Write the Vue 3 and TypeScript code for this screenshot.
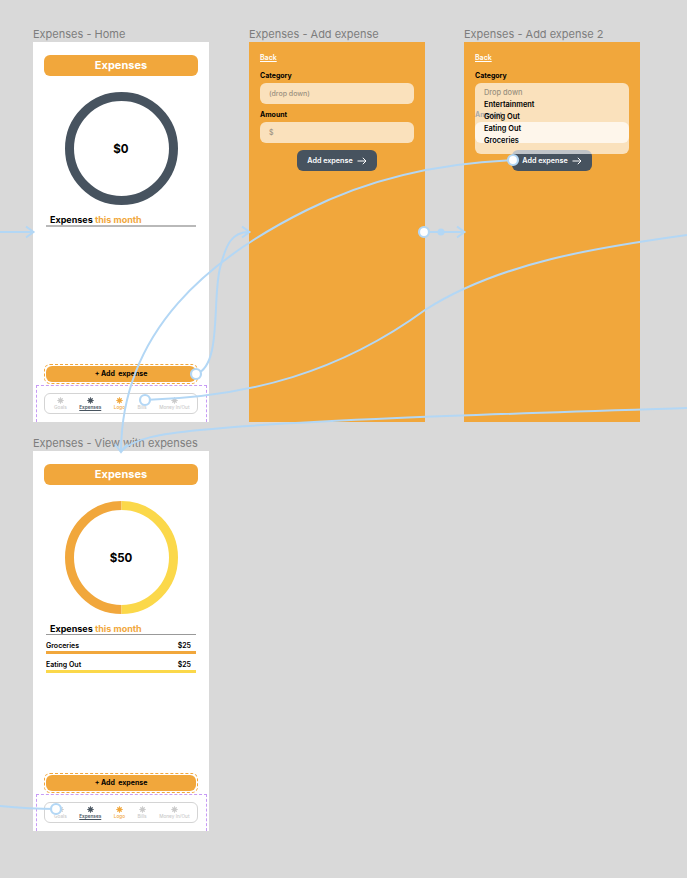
<script setup lang="ts">
const navItems = [
  { label: 'Goals', tone: 'muted' },
  { label: 'Expenses', tone: 'dark' },
  { label: 'Logo', tone: 'orange' },
  { label: 'Bills', tone: 'muted' },
  { label: 'Money In/Out', tone: 'muted' },
]
const sun = 'M3.5 0v7M0 3.5h7M1 1l5 5M6 1L1 6'
const viewRows = [
  { name: 'Groceries', amount: '$25', tone: 'orange' },
  { name: 'Eating Out', amount: '$25', tone: 'yellow' },
]
const dropOptions = ['Entertainment', 'Going Out', 'Eating Out', 'Groceries']
</script>

<template>
  <div class="canvas">
    <section class="screen at-home">
      <h2 class="frame-title">Expenses - Home</h2>
      <div class="frame white">
        <div class="banner">Expenses</div>
        <div class="ring">
          <svg width="113" height="113" viewBox="0 0 113 113"><circle cx="56.5" cy="56.5" r="52" fill="none" stroke="#47535f" stroke-width="9" /></svg>
          <span class="total">$0</span>
        </div>
        <div class="month">Expenses <em>this month</em></div>
        <div class="rule thick"></div>
        <div class="add-wrap"><button class="add">+ Add&nbsp; expense</button></div>
        <div class="nav-wrap">
          <nav class="nav">
            <div v-for="n in navItems" :key="n.label" class="nav-item" :class="n.tone">
              <svg width="7" height="7" viewBox="0 0 7 7"><path :d="sun" stroke="currentColor" stroke-width="0.7" /><circle cx="3.5" cy="3.5" r="2.3" fill="currentColor" /></svg>
              <span>{{ n.label }}</span>
            </div>
          </nav>
        </div>
      </div>
    </section>

    <section class="screen at-add">
      <h2 class="frame-title">Expenses - Add expense</h2>
      <div class="frame orange-bg form">
        <a class="back">Back</a>
        <label class="label first">Category</label>
        <div class="field">(drop down)</div>
        <label class="label">Amount</label>
        <div class="field">$</div>
        <button class="submit">Add expense
          <svg width="10" height="8" viewBox="0 0 10 8"><path d="M0.5 4h8.5M5.8 0.8L9 4L5.8 7.2" fill="none" stroke="#fff" stroke-width="1" /></svg>
        </button>
      </div>
    </section>

    <section class="screen at-add2">
      <h2 class="frame-title">Expenses - Add expense 2</h2>
      <div class="frame orange-bg form">
        <a class="back">Back</a>
        <label class="label first">Category</label>
        <div class="field blank"></div>
        <label class="label">Amount</label>
        <div class="field blank"></div>
        <button class="submit">Add expense
          <svg width="10" height="8" viewBox="0 0 10 8"><path d="M0.5 4h8.5M5.8 0.8L9 4L5.8 7.2" fill="none" stroke="#fff" stroke-width="1" /></svg>
        </button>
        <div class="dropdown">
          <div class="hilite"></div>
          <div class="opt placeholder">Drop down</div>
          <div v-for="o in dropOptions" :key="o" class="opt">{{ o }}</div>
        </div>
      </div>
    </section>

    <section class="screen at-view">
      <h2 class="frame-title">Expenses - View with expenses</h2>
      <div class="frame white">
        <div class="banner">Expenses</div>
        <div class="ring">
          <svg width="113" height="113" viewBox="0 0 113 113">
            <path d="M56.5 4.5a52 52 0 0 0 0 104" fill="none" stroke="#f1a73c" stroke-width="9" />
            <path d="M56.5 4.5a52 52 0 0 1 0 104" fill="none" stroke="#fbd84a" stroke-width="9" />
          </svg>
          <span class="total">$50</span>
        </div>
        <div class="month">Expenses <em>this month</em></div>
        <div class="rule"></div>
        <div v-for="r in viewRows" :key="r.name" class="row">
          <div class="row-text"><span>{{ r.name }}</span><span>{{ r.amount }}</span></div>
          <div class="bar" :class="r.tone"></div>
        </div>
        <div class="add-wrap"><button class="add">+ Add&nbsp; expense</button></div>
        <div class="nav-wrap">
          <nav class="nav">
            <div v-for="n in navItems" :key="n.label" class="nav-item" :class="n.tone">
              <svg width="7" height="7" viewBox="0 0 7 7"><path :d="sun" stroke="currentColor" stroke-width="0.7" /><circle cx="3.5" cy="3.5" r="2.3" fill="currentColor" /></svg>
              <span>{{ n.label }}</span>
            </div>
          </nav>
        </div>
      </div>
    </section>

    <svg class="wires" width="687" height="878" viewBox="0 0 687 878" fill="none" stroke="#b3d7f5" stroke-width="2">
      <path d="M0 232H33M26 226.5L33.5 232L26 237.5" />
      <path d="M196 374C222 366 212 300 220 268C226 244 232 232 249 232M242 226.5L249.5 232L242 237.5" />
      <path d="M424 232H464M457 226.5L464.5 232L457 237.5" />
      <circle cx="441" cy="232" r="2.5" fill="#b3d7f5" />
      <path d="M513 160C440 163 370 178 307 210C210 258 122 330 121 451M115 444L121 452L127 444" />
      <path d="M145 400C250 397 340 372 425 310C500 262 600 247 687 235" />
      <path d="M687 408C500 414 300 420 200 430C160 434 135 438 121 451" />
      <path d="M0 806C20 808 40 809 56 809" />
      <g fill="#fff" stroke-width="2.2">
        <circle cx="196" cy="374" r="5" />
        <circle cx="424" cy="232" r="5" />
        <circle cx="513" cy="160" r="5" />
        <circle cx="145" cy="400" r="5" />
        <circle cx="56" cy="809" r="5" />
      </g>
    </svg>
  </div>
</template>

<style scoped>
.canvas {
  position: relative;
  width: 687px;
  height: 878px;
  overflow: hidden;
  background: #d9d9d9;
  font-family: Inter, "Liberation Sans", sans-serif;
}
.screen { position: absolute; width: 176px; }
.at-home { left: 33px; top: 27px; }
.at-add { left: 249px; top: 27px; }
.at-add2 { left: 464px; top: 27px; }
.at-view { left: 33px; top: 436px; }
.frame-title {
  margin: 0;
  height: 15px;
  font-size: 11px;
  line-height: 14px;
  font-weight: 400;
  color: #7d7d7d;
  white-space: nowrap;
}
.frame {
  position: relative;
  box-sizing: border-box;
  height: 380px;
  display: flex;
  flex-direction: column;
}
.white { background: #fff; padding: 13px 11px 0; }
.orange-bg { background: #f1a73c; }
.banner {
  height: 21px;
  flex: none;
  border-radius: 6px;
  background: #f1a73c;
  color: #fff;
  font-size: 11px;
  font-weight: 700;
  line-height: 21px;
  text-align: center;
}
.ring {
  position: relative;
  flex: none;
  width: 113px;
  height: 113px;
  margin: 16px auto 0;
}
.ring svg { display: block; }
.total {
  position: absolute;
  inset: 0;
  display: flex;
  align-items: center;
  justify-content: center;
  font-size: 11.5px;
  font-weight: 700;
  color: #000;
}
.month {
  margin: 10px 0 0 6px;
  font-size: 9px;
  line-height: 10px;
  font-weight: 700;
  color: #000;
}
.month em { font-style: normal; color: #f1a73c; }
.rule { height: 1px; margin: 0 2px; background: #999; flex: none; }
.rule.thick { height: 2px; background: #b9b9b9; }
.row { margin: 6px 2px 0; }
.row + .row { margin-top: 6px; }
.row-text {
  display: flex;
  justify-content: space-between;
  padding-right: 5px;
  font-size: 7px;
  line-height: 10px;
  font-weight: 600;
  color: #000;
}
.bar { height: 3px; }
.bar.orange { background: #f1a73c; }
.bar.yellow { background: #fbd84a; }
.add-wrap {
  margin-top: auto;
  flex: none;
  padding: 1px;
  border: 1px dashed #f1a73c;
  border-radius: 6px;
}
.add {
  display: block;
  width: 100%;
  height: 16px;
  padding: 0;
  border: 0;
  border-radius: 6px;
  background: #f1a73c;
  color: #000;
  font: 700 7px/16px Inter, sans-serif;
}
.nav-wrap {
  flex: none;
  height: 37px;
  box-sizing: border-box;
  margin: 1px -9px 0 -8px;
  padding: 7px 8px 0 7px;
  border: 1px dashed #c79bf5;
  border-bottom: 0;
}
.nav {
  box-sizing: border-box;
  height: 21px;
  display: flex;
  gap: 12.5px;
  padding: 3px 0 0 9px;
  border: 1px solid #d4d4d4;
  border-radius: 6px;
  background: #fff;
}
.nav-item {
  display: flex;
  flex-direction: column;
  align-items: center;
  font-size: 4.7px;
  line-height: 6px;
  font-weight: 500;
  white-space: nowrap;
}
.nav-item svg { display: block; }
.nav-item.muted { color: #cacaca; }
.nav-item.dark { color: #47535f; }
.nav-item.dark span { text-decoration: underline; font-weight: 600; }
.nav-item.orange { color: #f1a73c; }
.form { padding: 11px 11px 0; }
.back {
  align-self: flex-start;
  font-size: 7px;
  line-height: 9px;
  font-weight: 600;
  color: #fff;
  text-decoration: underline;
}
.label {
  margin: 6px 0 2px;
  height: 10px;
  font-size: 7px;
  line-height: 10px;
  font-weight: 700;
  color: #000;
}
.label.first { margin-top: 9px; }
.field {
  flex: none;
  height: 21px;
  box-sizing: border-box;
  padding-left: 9px;
  border-radius: 6px;
  background: rgba(255, 255, 255, 0.66);
  font-size: 7px;
  line-height: 21px;
  font-weight: 500;
  color: #9b917f;
}
.field.blank { background: transparent; }
.submit {
  align-self: center;
  width: 80px;
  height: 21px;
  margin-top: 7px;
  display: flex;
  align-items: center;
  justify-content: center;
  gap: 4px;
  padding: 0;
  border: 0;
  border-radius: 6px;
  background: #47535f;
  color: #fff;
  font: 600 7.2px/21px Inter, sans-serif;
}
.dropdown {
  position: absolute;
  left: 11px;
  right: 11px;
  top: 41px;
  height: 71px;
  box-sizing: border-box;
  padding: 4px 9px;
  border-radius: 6px;
  background: rgba(255, 255, 255, 0.66);
}
.hilite {
  position: absolute;
  left: 0;
  right: 0;
  top: 39px;
  height: 21px;
  border-radius: 6px;
  background: rgba(255, 255, 255, 0.7);
}
.opt {
  position: relative;
  height: 12px;
  font-size: 7.4px;
  line-height: 12px;
  font-weight: 600;
  color: #000;
}
.opt.placeholder { color: #9b917f; font-weight: 500; }
.wires { position: absolute; left: 0; top: 0; pointer-events: none; }
</style>
